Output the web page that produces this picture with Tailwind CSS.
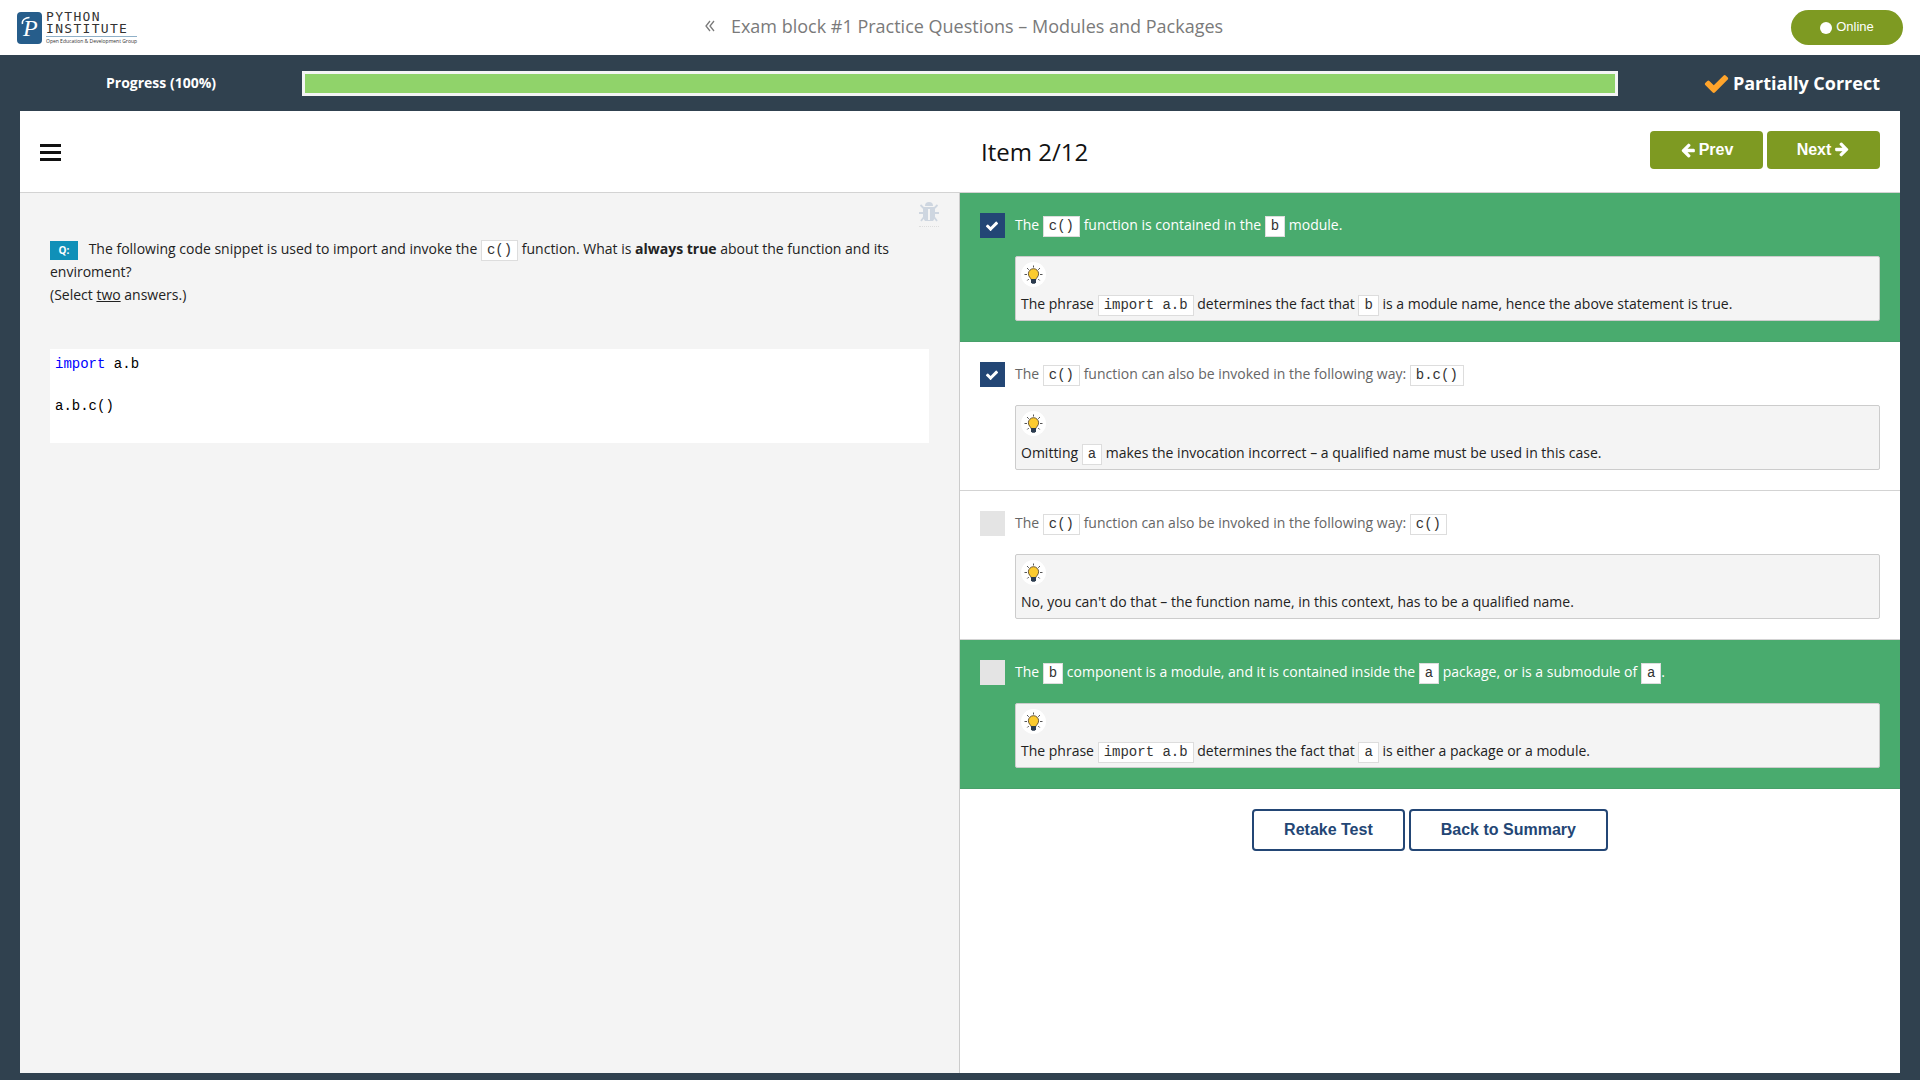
<!DOCTYPE html>
<html lang="en">
<head>
	<meta charset="UTF-8">
	<meta name="viewport" content="width=device-width, initial-scale=1.0">
	<title>Exam block #1 Practice Questions – Modules and Packages</title>
	<script src="https://cdn.jsdelivr.net/npm/@tailwindcss/browser@4"></script>
</head>
<body class="min-h-screen flex flex-col bg-[#30414f] font-['Open_Sans',sans-serif] text-sm text-[#222]">

	<!-- Shared icons -->
	<svg class="hidden">
		<symbol id="check" viewBox="0 0 1792 1792">
			<path d="M1671 566q0 40-28 68l-724 724-136 136q-28 28-68 28t-68-28l-136-136-362-362q-28-28-28-68t28-68l136-136q28-28 68-28t68 28l294 295 656-657q28-28 68-28t68 28l136 136q28 28 28 68z" />
		</symbol>
		<symbol id="arrow" viewBox="0 0 1792 1792">
			<path d="M1664 896v128q0 53-32.5 90.5t-84.5 37.5h-704l293 294q38 36 38 90t-38 90l-75 76q-37 37-90 37-52 0-91-37l-651-652q-37-37-37-90 0-52 37-91l651-650q38-38 91-38 52 0 90 38l75 74q38 38 38 91t-38 91l-293 293h704q52 0 84.5 37.5t32.5 90.5z" />
		</symbol>
		<symbol id="bulb" viewBox="0 0 25 25">
			<circle cx="12.5" cy="12.5" r="12.5" fill="#fff" />
			<path d="M12.5 3.5v2M3.5 12.5h2.5M19 12.5h2.5M6 6l1.8 1.8M19 6l-1.8 1.8M6.3 18.5l1.5-1.5M18.7 18.5l-1.5-1.5" stroke="#555" stroke-width="1" fill="none" />
			<path d="M10 17.5c0-1.6-2.6-2.6-2.6-5.7a5.1 5.1 0 0 1 10.2 0c0 3.1-2.6 4.1-2.6 5.7z" fill="#fccb2f" stroke="#5c4a2c" stroke-width=".9" />
			<path d="M10 17h5v3.2l-1.2 1.5h-2.6L10 20.2z" fill="#2b3b4e" />
		</symbol>
	</svg>

	<!-- Header -->
	<header class="h-[55px] flex justify-between items-center bg-white px-[17px]">
		<a href="#" class="flex items-center gap-1 text-[#333]">
			<svg class="w-[25px] h-8" viewBox="0 0 25 32">
				<rect width="25" height="32" rx="4" fill="#265d8b" />
				<text x="6" y="24" font-family="Liberation Serif, serif" font-style="italic" font-size="24" fill="#fff">P</text>
				<path d="M5.500 12c-1-4 3-6.500 7-6.500" stroke="#fff" stroke-width="1.500" fill="none" />
			</svg>
			<span class="flex flex-col font-['DejaVu_Sans_Mono',monospace]">
				<span class="text-[13px] leading-3 tracking-widest">PYTHON</span>
				<span class="text-[13px] leading-3 tracking-widest">INSTITUTE</span>
				<span class="border-t border-[#8fb0c8] mt-px text-[5px] leading-2 font-['Open_Sans',sans-serif]">Open Education &amp; Development Group</span>
			</span>
		</a>
		<h1 class="flex items-center gap-4 pb-[3px] text-lg text-[#7a7a7a]">
			<a href="#" aria-label="Back">
				<svg class="w-[10px] h-3" viewBox="0 0 10 12" fill="none" stroke="#7a7a7a" stroke-width="1.300"><path d="M5 1L1 6l4 5M9 1L5 6l4 5" /></svg>
			</a>
			Exam block #1 Practice Questions – Modules and Packages
		</h1>
		<button type="button" class="w-28 h-[35px] flex justify-center items-center gap-1 rounded-full bg-[#7e9a22] text-white text-[13px] font-['Liberation_Sans',sans-serif]">
			<span class="size-3 rounded-full bg-white"></span>Online
		</button>
	</header>

	<!-- Progress -->
	<div class="h-14 flex items-center px-5 text-white font-bold">
		<div class="w-[15%] text-center" id="progressLabel">Progress (100%)</div>
		<div class="w-[70%] h-[25px] border-3 border-[#f4f4f4]" role="progressbar" aria-labelledby="progressLabel" aria-valuenow="100">
			<div class="h-full bg-[#90d36a]" style="width: 100%"></div>
		</div>
		<div class="w-[15%] flex justify-end items-center gap-[3px] pr-5 text-lg whitespace-nowrap">
			<svg class="size-[27px] fill-[#ffa42b]"><use href="#check" /></svg>Partially Correct
		</div>
	</div>

	<main class="grow flex flex-col mx-5 mb-[7px] bg-white">
		<!-- Toolbar -->
		<div class="h-[82px] grid grid-cols-2 items-center border-b border-[#d3d3d3] px-5">
			<button type="button" aria-label="Menu" class="w-[21px] flex flex-col gap-1 pt-0.5">
				<span class="h-[3px] bg-[#111]"></span>
				<span class="h-[3px] bg-[#111]"></span>
				<span class="h-[3px] bg-[#111]"></span>
			</button>
			<div class="flex justify-between items-center pl-[21px]">
				<h2 class="text-2xl text-[#111]">Item 2/12</h2>
				<div class="flex gap-1 pb-1 font-['Liberation_Sans',sans-serif] font-bold text-base text-white">
					<button type="button" class="w-[113px] h-[38px] flex justify-center items-center gap-[3px] rounded bg-[#7e9a22]">
						<svg class="size-4 fill-white"><use href="#arrow" /></svg>Prev
					</button>
					<button type="button" class="w-[113px] h-[38px] flex justify-center items-center gap-[3px] rounded bg-[#7e9a22]">
						Next<svg class="size-4 fill-white rotate-180"><use href="#arrow" /></svg>
					</button>
				</div>
			</div>
		</div>

		<div class="grow grid grid-cols-2">
			<!-- Question -->
			<section class="relative bg-[#f4f4f4] border-r border-[#ccc] px-[30px] pt-11">
				<a href="#" aria-label="Report a bug" class="absolute top-[9px] right-5 border-b border-dotted border-[#ddd] pb-1">
					<svg class="size-5" viewBox="0 0 20 20">
						<path d="M6 4a4 4 0 0 1 8 0z" fill="#ced6e0" />
						<path d="M4 5h12v11l-2 3H6l-2-3z" fill="#ced6e0" />
						<path d="M1.5 3L4.5 6M18.5 3L15.5 6M0 11h4M16 11h4M5 15l-3 4M15 15l3 4" stroke="#ced6e0" stroke-width="1.8" fill="none" />
						<path d="M10 7v11" stroke="#f4f4f4" stroke-width="2" />
					</svg>
				</a>
				<p class="leading-[23px]">
					<span class="inline-block w-7 -my-px mr-[7px] bg-[#1090b8] text-white text-center text-[10px] leading-[19px] font-bold">Q:</span>
					The following code snippet is used to import and invoke the
					<code class="inline-block -my-px border border-[#ddd] bg-white px-[5px] leading-[19px] text-sm text-[#333] font-['Liberation_Mono',monospace]">c()</code>
					function. What is <strong>always true</strong> about the function and its enviroment?<br>
					(Select <u>two</u> answers.)
				</p>
				<pre class="mt-[43px] p-[5px] bg-white text-sm leading-[21px] text-black font-['Liberation_Mono',monospace]"><span class="text-[#0000ff]">import</span> a.b

a.b.c()
&nbsp;</pre>
			</section>

			<!-- Answers -->
			<section>
				<div class="flex gap-[10px] bg-[#49ab6e] border-b border-[#48a06a] p-5">
					<div class="relative size-[25px] shrink-0">
						<input type="checkbox" id="answer1" checked class="appearance-none block size-[25px] bg-[#e4e4e4] checked:bg-[#234675]">
						<svg class="absolute left-[5px] top-[6px] size-[14px] fill-white pointer-events-none"><use href="#check" /></svg>
					</div>
					<div class="grow">
						<label for="answer1" class="block text-white leading-[23px]">The <code class="inline-block -my-px border border-[#ddd] bg-white px-[5px] leading-[19px] text-sm text-[#333] font-['Liberation_Mono',monospace]">c()</code> function is contained in the <code class="inline-block -my-px border border-[#ddd] bg-white px-[5px] leading-[19px] text-sm text-[#333] font-['Liberation_Mono',monospace]">b</code> module.</label>
						<div class="mt-5 border border-[#ccc] rounded-xs bg-[#f4f4f4] p-[5px]">
							<svg class="size-[25px]"><use href="#bulb" /></svg>
							<p class="leading-[23px] pt-[5px]">The phrase <code class="inline-block -my-px border border-[#ddd] bg-white px-[5px] leading-[19px] text-sm text-[#333] font-['Liberation_Mono',monospace]">import a.b</code> determines the fact that <code class="inline-block -my-px border border-[#ddd] bg-white px-[5px] leading-[19px] text-sm text-[#333] font-['Liberation_Mono',monospace]">b</code> is a module name, hence the above statement is true.</p>
						</div>
					</div>
				</div>

				<div class="flex gap-[10px] border-b border-[#d3d3d3] p-5">
					<div class="relative size-[25px] shrink-0">
						<input type="checkbox" id="answer2" checked class="appearance-none block size-[25px] bg-[#e4e4e4] checked:bg-[#234675]">
						<svg class="absolute left-[5px] top-[6px] size-[14px] fill-white pointer-events-none"><use href="#check" /></svg>
					</div>
					<div class="grow">
						<label for="answer2" class="block text-[#666] leading-[23px]">The <code class="inline-block -my-px border border-[#ddd] bg-white px-[5px] leading-[19px] text-sm text-[#333] font-['Liberation_Mono',monospace]">c()</code> function can also be invoked in the following way: <code class="inline-block -my-px border border-[#ddd] bg-white px-[5px] leading-[19px] text-sm text-[#333] font-['Liberation_Mono',monospace]">b.c()</code></label>
						<div class="mt-5 border border-[#ccc] rounded-xs bg-[#f4f4f4] p-[5px]">
							<svg class="size-[25px]"><use href="#bulb" /></svg>
							<p class="leading-[23px] pt-[5px]">Omitting <code class="inline-block -my-px border border-[#ddd] bg-white px-[5px] leading-[19px] text-sm text-[#333] font-['Liberation_Mono',monospace]">a</code> makes the invocation incorrect – a qualified name must be used in this case.</p>
						</div>
					</div>
				</div>

				<div class="flex gap-[10px] border-b border-[#d3d3d3] p-5">
					<input type="checkbox" id="answer3" class="appearance-none size-[25px] shrink-0 bg-[#e4e4e4] checked:bg-[#234675]">
					<div class="grow">
						<label for="answer3" class="block text-[#666] leading-[23px]">The <code class="inline-block -my-px border border-[#ddd] bg-white px-[5px] leading-[19px] text-sm text-[#333] font-['Liberation_Mono',monospace]">c()</code> function can also be invoked in the following way: <code class="inline-block -my-px border border-[#ddd] bg-white px-[5px] leading-[19px] text-sm text-[#333] font-['Liberation_Mono',monospace]">c()</code></label>
						<div class="mt-5 border border-[#ccc] rounded-xs bg-[#f4f4f4] p-[5px]">
							<svg class="size-[25px]"><use href="#bulb" /></svg>
							<p class="leading-[23px] pt-[5px]">No, you can't do that – the function name, in this context, has to be a qualified name.</p>
						</div>
					</div>
				</div>

				<div class="flex gap-[10px] bg-[#49ab6e] border-b border-[#48a06a] p-5">
					<input type="checkbox" id="answer4" class="appearance-none size-[25px] shrink-0 bg-[#e4e4e4] checked:bg-[#234675]">
					<div class="grow">
						<label for="answer4" class="block text-white leading-[23px]">The <code class="inline-block -my-px border border-[#ddd] bg-white px-[5px] leading-[19px] text-sm text-[#333] font-['Liberation_Mono',monospace]">b</code> component is a module, and it is contained inside the <code class="inline-block -my-px border border-[#ddd] bg-white px-[5px] leading-[19px] text-sm text-[#333] font-['Liberation_Mono',monospace]">a</code> package, or is a submodule of <code class="inline-block -my-px border border-[#ddd] bg-white px-[5px] leading-[19px] text-sm text-[#333] font-['Liberation_Mono',monospace]">a</code>.</label>
						<div class="mt-5 border border-[#ccc] rounded-xs bg-[#f4f4f4] p-[5px]">
							<svg class="size-[25px]"><use href="#bulb" /></svg>
							<p class="leading-[23px] pt-[5px]">The phrase <code class="inline-block -my-px border border-[#ddd] bg-white px-[5px] leading-[19px] text-sm text-[#333] font-['Liberation_Mono',monospace]">import a.b</code> determines the fact that <code class="inline-block -my-px border border-[#ddd] bg-white px-[5px] leading-[19px] text-sm text-[#333] font-['Liberation_Mono',monospace]">a</code> is either a package or a module.</p>
						</div>
					</div>
				</div>

				<div class="flex justify-center gap-1 p-5 font-['Liberation_Sans',sans-serif] font-bold text-base text-[#234675]">
					<button type="button" class="h-[42px] px-[30px] border-2 border-[#234675] rounded">Retake Test</button>
					<button type="button" class="h-[42px] px-[30px] border-2 border-[#234675] rounded">Back to Summary</button>
				</div>
			</section>
		</div>
	</main>
</body>
</html>
